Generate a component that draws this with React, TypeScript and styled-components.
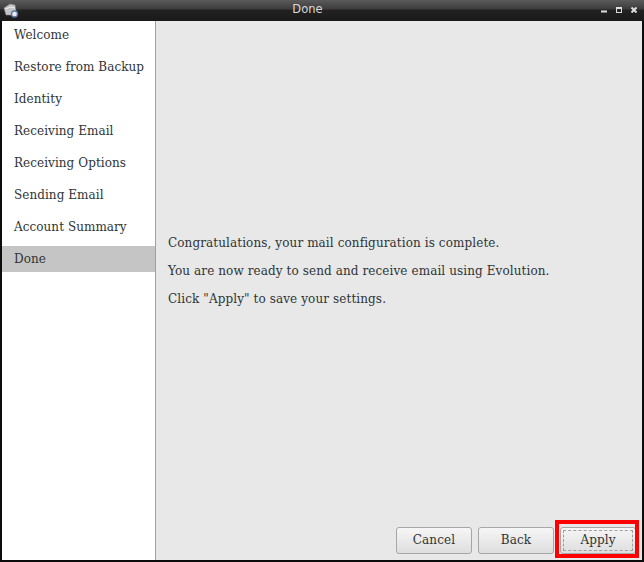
import React from "react";
import styled, { createGlobalStyle } from "styled-components";

const Global = createGlobalStyle`
  html, body { margin: 0; padding: 0; background: #000; }
  #root { width: 644px; height: 562px; }
`;

const Window = styled.div`
  width: 644px;
  height: 562px;
  display: flex;
  flex-direction: column;
  background: #0c0c0c;
  font-family: "DejaVu Serif", serif;
  font-size: 12px;
  color: #2e3436;
  overflow: hidden;
  position: relative;
`;

const TitleBar = styled.div`
  height: 21px;
  flex: none;
  position: relative;
  display: flex;
  align-items: center;
  justify-content: center;
  padding: 0 29px 3px 0;
  box-sizing: border-box;
  background: linear-gradient(#5a5a5a 0, #3c3c3c 9px, #222 10px, #191919 100%);
  color: #d8d8d8;
  font-family: "DejaVu Sans", sans-serif;
  font-size: 11.5px;
`;

const AppIcon = styled.svg`
  position: absolute;
  left: 3px;
  top: 3px;
`;

const Controls = styled.div`
  position: absolute;
  right: 7px;
  top: 7px;
  display: flex;
  gap: 9px;
`;

const Control = styled.svg`
  display: block;
  width: 6px;
  height: 6px;
`;

const Body = styled.div`
  flex: 1;
  display: flex;
  margin: 0 2px 2px 2px;
  min-height: 0;
  background: #e8e8e8;
`;

const Sidebar = styled.div`
  width: 153px;
  flex: none;
  background: #fff;
  border-right: 1px solid #a0a0a0;
  display: flex;
  flex-direction: column;
  padding-top: 1px;
`;

const Step = styled.div<{ $active?: boolean }>`
  height: 26px;
  margin-bottom: 6px;
  line-height: 27px;
  padding-left: 12px;
  letter-spacing: 0.06px;
  background: ${(p) => (p.$active ? "#c4c5c4" : "transparent")};
`;

const Main = styled.div`
  flex: 1;
  display: flex;
  flex-direction: column;
  padding-left: 12px;
  min-width: 0;
`;

const Content = styled.div`
  flex: 1;
  display: flex;
  flex-direction: column;
  justify-content: center;
  gap: 12px;
  padding-bottom: 7px;
`;

const Para = styled.p`
  margin: 0;
  line-height: 16px;
  letter-spacing: 0.1px;
`;

const ButtonRow = styled.div`
  display: flex;
  justify-content: flex-end;
  gap: 6px;
  padding: 0 6px 6px 0;
`;

const Button = styled.button`
  width: 76px;
  height: 27px;
  border: 1px solid #a6a6a6;
  border-radius: 3px;
  background: linear-gradient(#f6f6f6, #dedede);
  font: inherit;
  letter-spacing: 0.1px;
  color: #2e3436;
  padding: 0 0 2px;
  position: relative;
`;

const FocusRing = styled.span`
  position: absolute;
  inset: 2px;
  padding-bottom: 2px;
  border: 1px dashed #a0a0a0;
  display: flex;
  align-items: center;
  justify-content: center;
`;

const Highlight = styled.div`
  position: absolute;
  left: 555px;
  top: 520px;
  width: 84px;
  height: 38px;
  box-sizing: border-box;
  border: 4px solid #f00;
  pointer-events: none;
`;

const steps = [
  "Welcome",
  "Restore from Backup",
  "Identity",
  "Receiving Email",
  "Receiving Options",
  "Sending Email",
  "Account Summary",
  "Done",
];

export default function App() {
  return (
    <>
      <Global />
      <Window>
        <TitleBar>
          <AppIcon width="16" height="15" viewBox="0 0 16 15">
            <path d="M1 5 L7 1 L12 2 L13 8 L10 12 L3 12 Z" fill="#c4c4c4" stroke="#8a8a8a" strokeWidth="0.6" />
            <path d="M2 6 L8 4 L12 5" fill="none" stroke="#eeeeee" strokeWidth="1" />
            <circle cx="11.5" cy="11" r="3" fill="#e6ebf4" stroke="#5a76a8" strokeWidth="1.3" />
          </AppIcon>
          Done
          <Controls>
            <Control viewBox="0 0 6 6"><rect x="0" y="3.5" width="6" height="2" fill="#ddd" /></Control>
            <Control viewBox="0 0 6 6"><rect x="0.5" y="0.5" width="5" height="5" fill="none" stroke="#ddd" strokeWidth="1" /><rect x="0" y="0" width="6" height="2" fill="#ddd" /></Control>
            <Control viewBox="0 0 6 6"><path d="M0.5 0.5 L5.5 5.5 M5.5 0.5 L0.5 5.5" stroke="#ddd" strokeWidth="2" /></Control>
          </Controls>
        </TitleBar>
        <Body>
          <Sidebar>
            {steps.map((s) => (
              <Step key={s} $active={s === "Done"}>{s}</Step>
            ))}
          </Sidebar>
          <Main>
            <Content>
              <Para>Congratulations, your mail configuration is complete.</Para>
              <Para>You are now ready to send and receive email using Evolution.</Para>
              <Para>Click "Apply" to save your settings.</Para>
            </Content>
            <ButtonRow>
              <Button>Cancel</Button>
              <Button>Back</Button>
              <Button><FocusRing>Apply</FocusRing></Button>
            </ButtonRow>
          </Main>
        </Body>
        <Highlight />
      </Window>
    </>
  );
}
